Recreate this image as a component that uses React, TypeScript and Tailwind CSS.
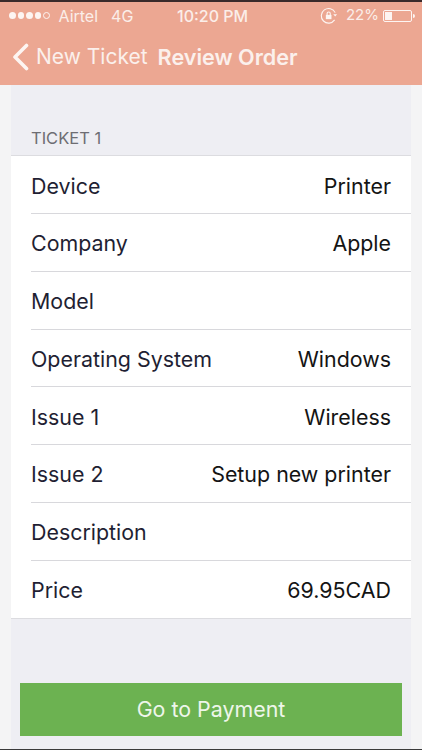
const rows = [
  { label: "Device", value: "Printer" },
  { label: "Company", value: "Apple" },
  { label: "Model", value: "" },
  { label: "Operating System", value: "Windows" },
  { label: "Issue 1", value: "Wireless" },
  { label: "Issue 2", value: "Setup new printer" },
  { label: "Description", value: "" },
  { label: "Price", value: "69.95CAD" },
];

function StatusBar() {
  return (
    <div className="relative flex h-[27px] items-center pl-[9px] pr-[7px] text-[16px] text-[#fbeee9]">
      <div className="flex items-center gap-[2px]">
        {[0, 1, 2, 3].map((i) => (
          <span key={i} className="h-[6.5px] w-[6.5px] rounded-full bg-[#fdf5f2]" />
        ))}
        <span className="h-[6.5px] w-[6.5px] rounded-full border border-[#fdf5f2]" />
      </div>
      <span className="ml-[9px]">Airtel</span>
      <span className="ml-[13px]">4G</span>
      <span className="absolute left-[177px] font-medium">10:20 PM</span>
      <div className="ml-auto flex items-center gap-[4px]">
        <svg width="18" height="18" viewBox="0 0 16 16" fill="none" stroke="#fdf5f2" strokeWidth="1" className="mr-[4px]">
          <path d="M13 11.5A6.5 6.5 0 1 1 13.5 5" />
          <path d="M11.8 6.5h3.4l-1.7 2z" fill="#fdf5f2" stroke="none" />
          <rect x="5.2" y="7" width="5" height="3.8" fill="#fdf5f2" stroke="none" />
          <path d="M6.3 7V5.8a1.4 1.4 0 0 1 2.8 0V7" />
        </svg>
        <span className="text-[15px]">22%</span>
        <div className="flex items-center">
          <div className="h-[12px] w-[29px] rounded-[2px] border border-[#fdf5f2] p-[1px]">
            <div className="h-full w-[7px] bg-[#fdf5f2]" />
          </div>
          <span className="ml-[1px] h-[4px] w-[2px] rounded-r-sm bg-[#fdf5f2]" />
        </div>
      </div>
    </div>
  );
}

export default function App() {
  return (
    <div className="flex h-[750px] w-[422px] flex-col overflow-hidden bg-[#f4f4f5] font-['Inter',sans-serif]">
      <div className="h-[2px] bg-[#3a2a2a]" />
      <header className="h-[83px] bg-[#eca792]">
        <StatusBar />
        <div className="flex h-[56px] items-center pl-[12px] text-[#fbf0ec]">
          <svg width="17" height="28" viewBox="0 0 17 28" fill="none" stroke="#fdf5f2" strokeWidth="3.6" strokeLinecap="round" strokeLinejoin="round">
            <path d="M14.5 2.5 3 14l11.5 11.5" />
          </svg>
          <span className="ml-[7px] text-[21px]">New Ticket</span>
          <span className="ml-[10px] text-[21.6px] font-semibold">Review Order</span>
        </div>
      </header>

      <main className="mx-[11px] flex flex-1 flex-col bg-[#eeeef3]">
        <div className="flex h-[70.4px] items-end pb-[5px] pl-[20px] text-[16.5px] text-[#6d6d72]">TICKET 1</div>
        <div className="border-y border-[#dcdce0] bg-white">
          {rows.map((row, i) => (
            <div
              key={row.label}
              className={`ml-[20px] flex h-[57.75px] items-center justify-between pr-[20px] pt-[2px] text-[21.4px] ${
                i < rows.length - 1 ? "border-b border-[#d8d8dc]" : ""
              }`}
            >
              <span className="text-[#1f1f33]">{row.label}</span>
              <span className="text-[#141414]">{row.value}</span>
            </div>
          ))}
        </div>
        <button className="mx-[9px] mt-[63.6px] flex h-[53px] items-center justify-center bg-[#6cb251] text-[21.4px] text-[#eef6ea]">
          Go to Payment
        </button>
      </main>
      <div className="h-[1px] bg-[#3a3a3a]" />
    </div>
  );
}
